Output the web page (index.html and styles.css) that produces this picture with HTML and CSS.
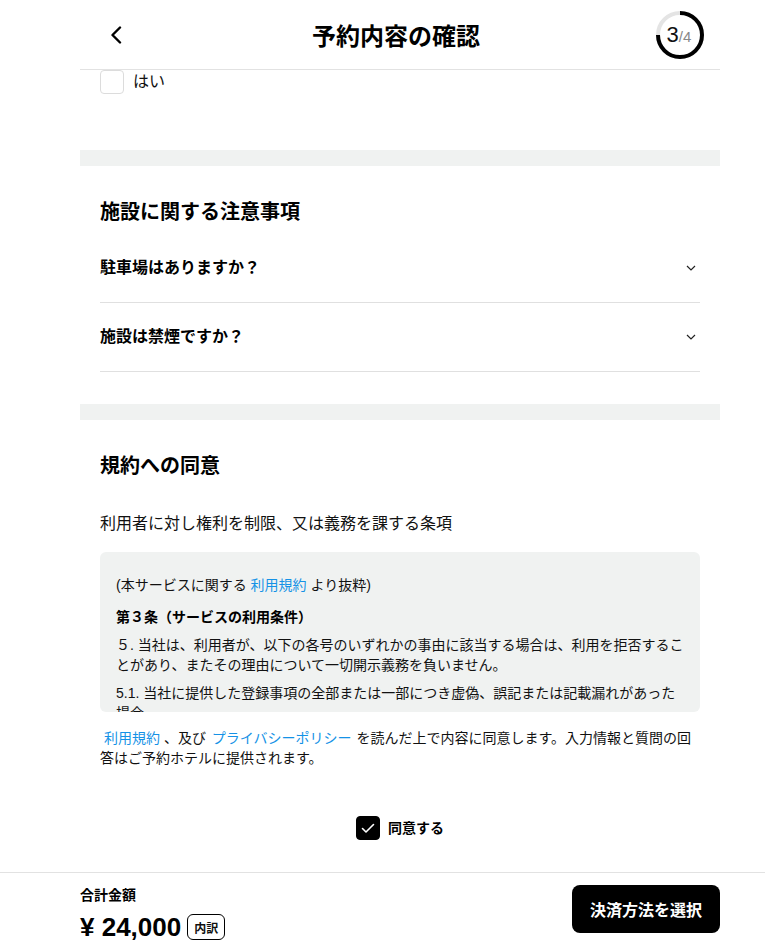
FILE: index.html
```html
<!DOCTYPE html>
<html lang="ja">
<head>
<meta charset="utf-8">
<title>予約内容の確認</title>
<link rel="stylesheet" href="styles.css">
</head>
<body>
<div class="page">
  <header class="topbar">
    <div class="topbar-left">
      <svg class="back" width="12" height="18" viewBox="0 0 12 18"><path d="M10 1.5 L2.5 9 L10 16.5" fill="none" stroke="#000" stroke-width="2.4" stroke-linecap="round" stroke-linejoin="round"/></svg>
    </div>
    <h1 class="title">予約内容の確認</h1>
    <div class="topbar-right">
      <div class="progress">
        <svg width="50" height="50" viewBox="0 0 50 50">
          <circle cx="25" cy="25" r="22" fill="none" stroke="#e4e4e4" stroke-width="4"/>
          <path d="M25 3 A22 22 0 1 1 3 25" fill="none" stroke="#000" stroke-width="4"/>
        </svg>
        <span class="progress-text"><span class="cur">3</span><span class="tot">/4</span></span>
      </div>
    </div>
  </header>

  <div class="answer-row">
    <span class="box"></span>
    <span class="answer-label">はい</span>
  </div>

  <div class="band"></div>

  <section class="section">
    <h2 class="section-title">施設に関する注意事項</h2>
    <div class="acc-row">
      <span class="acc-q">駐車場はありますか？</span>
      <svg class="chev" width="10" height="6" viewBox="0 0 10 6"><path d="M1 1 L5 5 L9 1" fill="none" stroke="#222" stroke-width="1.2"/></svg>
    </div>
    <div class="acc-row">
      <span class="acc-q">施設は禁煙ですか？</span>
      <svg class="chev" width="10" height="6" viewBox="0 0 10 6"><path d="M1 1 L5 5 L9 1" fill="none" stroke="#222" stroke-width="1.2"/></svg>
    </div>
  </section>

  <div class="band"></div>

  <section class="section terms">
    <h2 class="section-title">規約への同意</h2>
    <p class="terms-sub">利用者に対し権利を制限、又は義務を課する条項</p>
    <div class="terms-box">
      <p class="excerpt">(本サービスに関する <a class="link">利用規約</a> より抜粋)</p>
      <p class="article">第３条（サービスの利用条件）</p>
      <p class="clause">５. 当社は、利用者が、以下の各号のいずれかの事由に該当する場合は、利用を拒否することがあり、またその理由について一切開示義務を負いません。</p>
      <p class="clause">5.1. 当社に提供した登録事項の全部または一部につき虚偽、誤記または記載漏れがあった場合</p>
      <p class="clause">5.2. 過去に本サービスの利用規約に違反したことがある場合</p>
    </div>
    <p class="consent-text"><a class="link">利用規約</a> 、及び <a class="link pp">プライバシーポリシー</a> を読んだ上で内容に同意します。入力情報と質問の回答はご予約ホテルに提供されます。</p>
    <div class="agree">
      <span class="box checked">
        <svg width="14" height="11" viewBox="0 0 14 11"><path d="M1.5 5.5 L5 9 L12.5 1.5" fill="none" stroke="#fff" stroke-width="1.6" stroke-linecap="round" stroke-linejoin="round"/></svg>
      </span>
      <span class="agree-label">同意する</span>
    </div>
  </section>
</div>

<footer class="footer">
  <div class="footer-inner">
    <div class="total">
      <div class="total-label">合計金額</div>
      <div class="price-row">
        <span class="price">¥ 24,000</span>
        <span class="badge">内訳</span>
      </div>
    </div>
    <button class="pay-btn">決済方法を選択</button>
  </div>
</footer>
</body>
</html>
```

FILE: styles.css
```css
* { box-sizing: border-box; }
html, body { margin: 0; padding: 0; overflow: hidden; }
body {
  font-family: "Liberation Sans", "Noto Sans CJK JP", sans-serif;
  color: #111;
  background: #fff;
}
p, h1, h2 { margin: 0; }

.page {
  width: 640px;
  margin-left: 80px;
}

/* header */
.topbar {
  height: 70px;
  border-bottom: 1px solid #e2e2e2;
  display: grid;
  grid-template-columns: 1fr auto 1fr;
  align-items: center;
}
.topbar-left { padding-left: 30px; display: flex; align-items: center; }
.back { display: block; }
.title {
  font-family: "Noto Sans CJK JP", sans-serif;
  font-size: 24px;
  font-weight: 700;
  line-height: 32px;
  padding-right: 8px;
  color: #000;
}
.topbar-right { display: flex; justify-content: flex-end; padding-right: 15px; }
.progress { position: relative; width: 50px; height: 50px; }
.progress svg { display: block; }
.progress-text {
  position: absolute; inset: 0;
  display: flex; align-items: center; justify-content: center;
  font-family: "Liberation Sans", sans-serif;
  padding-right: 2px;
}
.cur { font-size: 22px; color: #111; }
.tot { font-size: 15px; color: #888; margin-top: 4px; }

/* scrolled answer row */
.answer-row {
  display: flex;
  align-items: center;
  gap: 9px;
  padding: 0 20px;
  height: 24px;
  margin-bottom: 56px;
}
.box {
  width: 24px; height: 24px;
  border: 1px solid #dcdcdc;
  border-radius: 4px;
  display: flex; align-items: center; justify-content: center;
  flex: none;
}
.answer-label { font-size: 16px; line-height: 24px; }

.band { height: 16px; background: #f0f2f1; }

.section { padding: 31px 20px 32px; }
.section-title {
  font-family: "Noto Sans CJK JP", sans-serif;
  font-size: 20px;
  font-weight: 700;
  line-height: 28px;
  margin-bottom: 9px;
  color: #000;
}
.acc-row {
  display: flex;
  align-items: center;
  justify-content: space-between;
  padding: 22px 4px 22px 0;
  height: 69px;
  border-bottom: 1px solid #e0e0e0;
}
.acc-q { font-size: 16px; font-weight: 700; line-height: 24px; color: #000; }
.chev { display: block; }

/* terms */
.terms { padding-bottom: 32px; }
.terms .section-title { margin-bottom: 33px; }
.terms-sub { font-size: 16px; line-height: 24px; margin-bottom: 16px; }
.terms-box {
  height: 160px;
  overflow: hidden;
  background: #f0f2f1;
  border-radius: 6px;
  padding: 23px 16px 0;
  font-size: 14px;
  line-height: 20px;
}
.excerpt { margin-bottom: 12px; }
.article { font-weight: 700; margin-bottom: 8px; color: #000; }
.clause { margin-bottom: 8px; }
.link { color: #1592e6; text-decoration: none; }

.consent-text {
  margin-top: 16px;
  font-size: 14px;
  line-height: 20px;
  text-indent: 4px;
}
.consent-text .pp { padding: 0 1px 0 2px; }
.agree {
  margin-top: 48px;
  display: flex;
  align-items: center;
  justify-content: center;
  gap: 8px;
}
.box.checked { background: #000; border-color: #000; }
.agree-label { font-size: 14px; font-weight: 700; line-height: 24px; color: #000; }

/* footer */
.footer {
  border-top: 1px solid #e2e2e2;
  height: 77px;
}
.footer-inner {
  width: 640px;
  margin-left: 80px;
  display: flex;
  justify-content: space-between;
  align-items: flex-start;
  padding-top: 12px;
}
.total-label { font-size: 14px; font-weight: 700; line-height: 20px; color: #000; }
.price-row { margin-top: 9px; display: flex; align-items: center; gap: 6px; height: 26px; }
.price { font-size: 26px; font-weight: 700; line-height: 26px; color: #000; letter-spacing: 0; }
.badge {
  height: 26px;
  width: 38px;
  flex: none;
  border: 1px solid #000;
  border-radius: 6px;
  font-family: "Noto Sans CJK JP", sans-serif;
  font-size: 12px;
  font-weight: 700;
  display: flex; align-items: center; justify-content: center;
}
.pay-btn {
  width: 148px;
  height: 48px;
  background: #000;
  color: #fff;
  border: none;
  border-radius: 8px;
  font-family: "Noto Sans CJK JP", sans-serif;
  font-size: 16px;
  font-weight: 700;
  padding: 0;
}
```
